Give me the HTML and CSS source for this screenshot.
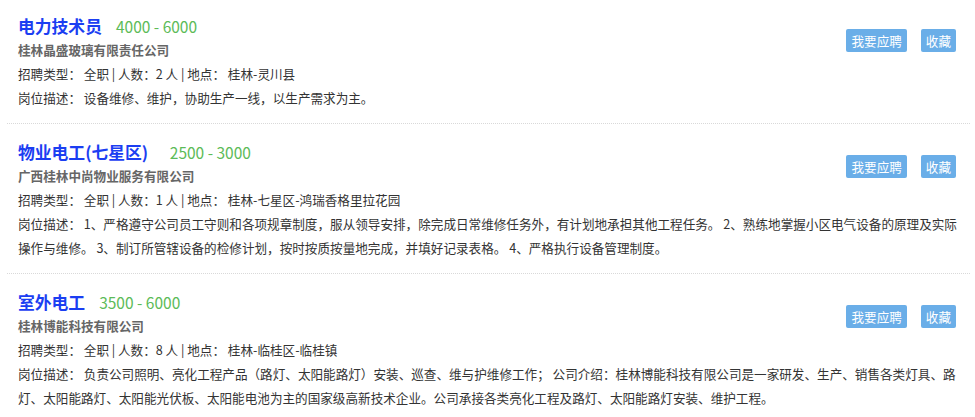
FILE: index.html
```html
<!DOCTYPE html>
<html lang="zh-CN">
<head>
<meta charset="utf-8">
<title>职位列表</title>
<link rel="stylesheet" href="styles.css">
</head>
<body>
<div class="job-list">
  <div class="job">
    <div class="actions">
      <a class="btn btn-apply">我要应聘</a>
      <a class="btn btn-fav">收藏</a>
    </div>
    <div class="job-head"><a class="job-title">电力技术员</a><span class="salary">4000 - 6000</span></div>
    <div class="company">桂林晶盛玻璃有限责任公司</div>
    <div class="info">招聘类型： 全职 | 人数：2 人 | 地点： 桂林-灵川县</div>
    <div class="info">岗位描述： 设备维修、维护，协助生产一线，以生产需求为主。</div>
  </div>
  <div class="job">
    <div class="actions">
      <a class="btn btn-apply">我要应聘</a>
      <a class="btn btn-fav">收藏</a>
    </div>
    <div class="job-head"><a class="job-title">物业电工(七星区)  </a><span class="salary">2500 - 3000</span></div>
    <div class="company">广西桂林中尚物业服务有限公司</div>
    <div class="info">招聘类型： 全职 | 人数：1 人 | 地点： 桂林-七星区-鸿瑞香格里拉花园</div>
    <div class="info">岗位描述： 1、严格遵守公司员工守则和各项规章制度，服从领导安排，除完成日常维修任务外，有计划地承担其他工程任务。 2、熟练地掌握小区电气设备的原理及实际操作与维修。 3、制订所管辖设备的检修计划，按时按质按量地完成，并填好记录表格。 4、严格执行设备管理制度。</div>
  </div>
  <div class="job">
    <div class="actions">
      <a class="btn btn-apply">我要应聘</a>
      <a class="btn btn-fav">收藏</a>
    </div>
    <div class="job-head"><a class="job-title">室外电工</a><span class="salary">3500 - 6000</span></div>
    <div class="company">桂林博能科技有限公司</div>
    <div class="info">招聘类型： 全职 | 人数：8 人 | 地点： 桂林-临桂区-临桂镇</div>
    <div class="info">岗位描述： 负责公司照明、亮化工程产品（路灯、太阳能路灯）安装、巡查、维与护维修工作； 公司介绍：桂林博能科技有限公司是一家研发、生产、销售各类灯具、路灯、太阳能路灯、太阳能光伏板、太阳能电池为主的国家级高新技术企业。公司承接各类亮化工程及路灯、太阳能路灯安装、维护工程。</div>
  </div>
</div>
</body>
</html>
```

FILE: styles.css
```css
html, body {
  margin: 0;
  padding: 0;
  background: #ffffff;
}

body {
  font-family: "Noto Sans CJK SC", "Noto Sans", sans-serif;
  color: #333333;
  font-size: 12.6px;
  overflow: hidden;
}

.job-list {
  width: 963px;
  margin: -2px 0 0 7px;
}

.job {
  padding: 16px 6px 13px 11px;
  border-bottom: 1px dotted #d9d9d9;
}

.job::after {
  content: "";
  display: block;
  clear: both;
}

.actions {
  float: right;
  display: flex;
  gap: 14px;
  margin: 15px 8px 0 0;
}

.btn {
  display: block;
  height: 23px;
  line-height: 23px;
  padding: 0 5px;
  background: #6aaee8;
  color: #ffffff;
  font-size: 12.6px;
  border-radius: 2px;
  cursor: pointer;
}

.job-head {
  line-height: 24px;
  height: 24px;
  white-space: pre;
}

.job-title {
  font-size: 16.8px;
  font-weight: bold;
  color: #1b3ef2;
  margin-right: 14px;
}

.salary {
  font-size: 15.5px;
  color: #5cbb58;
}

.company {
  line-height: 24px;
  font-weight: bold;
  color: #666666;
  font-size: 12.6px;
}

.info {
  line-height: 24px;
  color: #333333;
}
```
